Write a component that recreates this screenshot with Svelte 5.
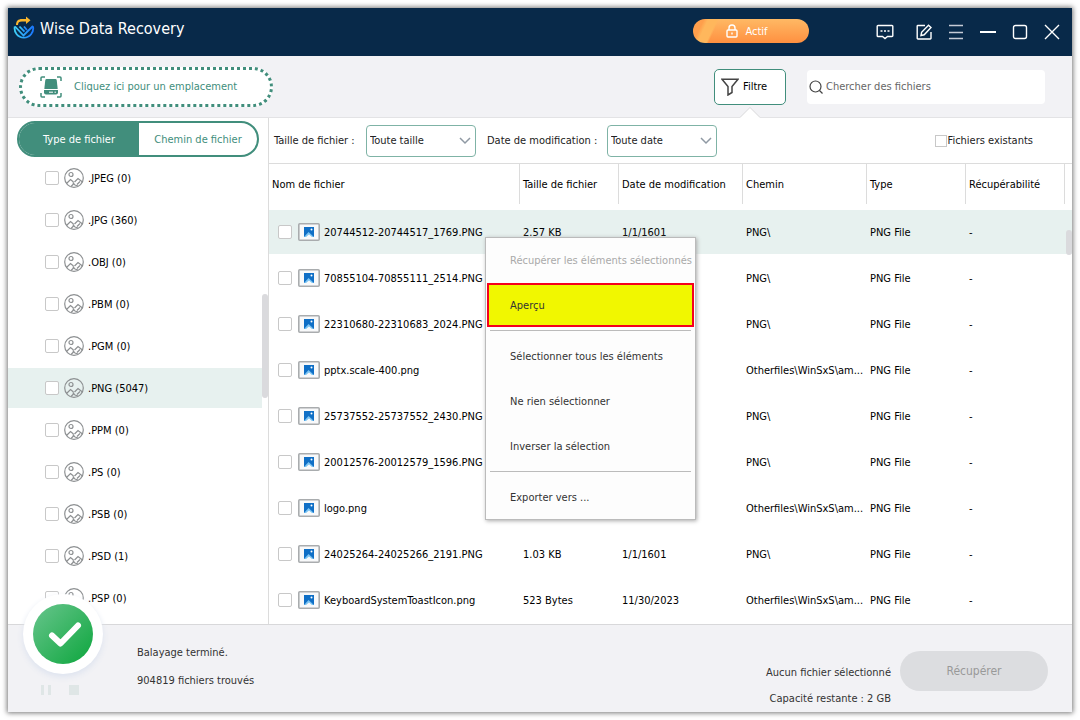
<script>
    // file types listed on the left side
    const types = [
        ['.JPEG', 0], ['.JPG', 360], ['.OBJ', 0], ['.PBM', 0], ['.PGM', 0], ['.PNG', 5047],
        ['.PPM', 0],  ['.PS', 0],    ['.PSB', 0], ['.PSD', 1], ['.PSP', 0]
    ];

    const files = [
        { name: '20744512-20744517_1769.PNG', size: '2.57 KB', date: '1/1/1601', path: 'PNG\\' },
        { name: '70855104-70855111_2514.PNG', size: '', date: '', path: 'PNG\\' },
        { name: '22310680-22310683_2024.PNG', size: '', date: '', path: 'PNG\\' },
        { name: 'pptx.scale-400.png', size: '', date: '', path: 'Otherfiles\\WinSxS\\am...' },
        { name: '25737552-25737552_2430.PNG', size: '', date: '', path: 'PNG\\' },
        { name: '20012576-20012579_1596.PNG', size: '', date: '', path: 'PNG\\' },
        { name: 'logo.png', size: '', date: '', path: 'Otherfiles\\WinSxS\\am...' },
        { name: '24025264-24025266_2191.PNG', size: '1.03 KB', date: '1/1/1601', path: 'PNG\\' },
        { name: 'KeyboardSystemToastIcon.png', size: '523 Bytes', date: '11/30/2023', path: 'Otherfiles\\WinSxS\\am...' }
    ];

    const columns = ['Nom de fichier', 'Taille de fichier', 'Date de modification', 'Chemin', 'Type', 'Récupérabilité'];

    let tab     = $state('type'),
        type    = $state('.PNG'),
        current = $state(0),
        search  = $state('');
</script>

{#snippet chevron()}
    <svg class="chevron" width="12" height="8" viewBox="0 0 12 8"><path d="M1 1l5 5 5-5" /></svg>
{/snippet}

<div class="window">
    <header>
        <svg class="logo" width="22" height="24" viewBox="0 0 22 24">
            <defs>
                <linearGradient id="blue">
                    <stop offset="0" stop-color="#3fd0f7" />
                    <stop offset="1" stop-color="#1a78ff" />
                </linearGradient>
            </defs>
            <g fill="none" stroke="url(#blue)" stroke-width="1.800">
                <path d="M1.800 10.500a9.300 9.300 0 1 0 18.200 0" />
                <path d="M2 10.500l8.500 9 9.500-9.500" />
                <path d="M6.500 10.500l5 5.200M11 10.500l3 3.500" />
            </g>
            <path d="M3 9c0-4 2-6 6-6h4V.5L17.500 4.200 13 8V5.500H9C6 5.500 5 6.500 5 9z" fill="#f9b62d" />
        </svg>
        <h1>Wise Data Recovery</h1>

        <button class="active">
            <svg width="12" height="14" viewBox="0 0 12 14">
                <rect x="1" y="6" width="10" height="7" rx="1" />
                <path d="M3 6V4a3 3 0 0 1 6 0v2M6 8.500v2" />
            </svg>
            Actif
        </button>

        <nav>
            <button class="message" aria-label="Message">
                <svg width="18" height="16" viewBox="0 0 18 16">
                    <path d="M2 1.500h14a.8.8 0 0 1 .8.8v9.400a.8.8 0 0 1-.8.8h-4.500L9 14.500l-2.500-2H2a.8.8 0 0 1-.8-.8V2.300a.8.8 0 0 1 .8-.8z" />
                    <path d="M4.500 7h2M8 7h2M11.500 7h2" />
                </svg>
            </button>
            <button aria-label="Modifier">
                <svg width="16" height="16" viewBox="0 0 16 16">
                    <path d="M9 1.500H2A.7.7 0 0 0 1.200 2v12.300a.7.7 0 0 0 .8.700h12.200a.7.7 0 0 0 .8-.7V8" />
                    <path d="M5 11.500l.6-3.200L12.500 1.200l2.500 2.400-6.800 7.200z" />
                </svg>
            </button>
            <button aria-label="Menu">
                <svg width="16" height="16" viewBox="0 0 16 16"><path d="M1 1.500h14M1 8.500h14M1 14.500h14" stroke="#c5cbd6" /></svg>
            </button>
            <button aria-label="Réduire">
                <svg width="16" height="16" viewBox="0 0 16 16"><path d="M0 8h16" stroke-width="2" /></svg>
            </button>
            <button aria-label="Agrandir">
                <svg width="16" height="16" viewBox="0 0 16 16"><rect x="1.500" y="1.500" width="13" height="13" rx="2" /></svg>
            </button>
            <button aria-label="Fermer">
                <svg width="16" height="16" viewBox="0 0 16 16"><path d="M1 1l14 14M15 1L1 15" /></svg>
            </button>
        </nav>
    </header>

    <div class="toolbar">
        <button class="location">
            <svg width="22" height="22" viewBox="0 0 22 22">
                <path d="M1 5V2q0-1 1-1h3M17 1h3q1 0 1 1v3M21 17v3q0 1-1 1h-3M5 21H2q-1 0-1-1v-3" fill="none" stroke="#418e7c" stroke-width="1.500" />
                <path d="M6.500 3h9q1 0 1.200 1l1 9H4.300l1-9q.2-1 1.200-1z" fill="#418e7c" />
                <path d="M4 14h14v2.500q0 2-2 2H6q-2 0-2-2z" fill="#418e7c" />
                <path d="M9 16.200h4M14.500 16.200h1.500" stroke="#fff" />
            </svg>
            Cliquez ici pour un emplacement
        </button>

        <button class="filter">
            <svg width="18" height="18" viewBox="0 0 18 18">
                <path d="M1 1.200h16l-6 7.300v6l-4 2.500V8.500z" />
            </svg>
            Filtre
        </button>

        <label class="search">
            <svg width="14" height="14" viewBox="0 0 14 14">
                <circle cx="6.500" cy="6.500" r="5.500" />
                <path d="M10.500 10.500l3 3" />
            </svg>
            <input type="text" placeholder="Chercher des fichiers" aria-label="Chercher des fichiers" bind:value={search}>
        </label>
    </div>

    <main>
        <aside>
            <div class="tabs">
                <button class:on={tab === 'type'} onclick={() => tab = 'type'}>Type de fichier</button>
                <button class:on={tab === 'path'} onclick={() => tab = 'path'}>Chemin de fichier</button>
            </div>
            <ul>
                {#each types as [ext, count]}
                    <li class:selected={ext === type}>
                        <input type="checkbox" id="type{ext}">
                        <svg width="20" height="20" viewBox="0 0 20 20">
                            <circle cx="10" cy="10" r="9.300" />
                            <circle cx="7" cy="6.500" r="2" />
                            <path d="M2.500 15.500l4-4 3 2.500M7 18.500l2.500-2.500-.5-1.500 2 2.500 3 1M10.500 14l3.500-3.500 4.500 3.500M13 16.500l3-3" />
                        </svg>
                        <label for="type{ext}">{ext} ({count})</label>
                    </li>
                {/each}
            </ul>
            <div class="thumb"></div>
        </aside>

        <section>
            <div class="filters">
                <label for="size">Taille de fichier :</label>
                <div class="select">
                    <select id="size"><option>Toute taille</option></select>
                    {@render chevron()}
                </div>
                <label for="date">Date de modification :</label>
                <div class="select">
                    <select id="date"><option>Toute date</option></select>
                    {@render chevron()}
                </div>
                <label class="existing"><input type="checkbox">Fichiers existants</label>
            </div>

            <table>
                <colgroup>
                    <col><col class="narrow"><col class="wide"><col class="wide"><col class="narrow"><col class="narrow"><col class="gutter">
                </colgroup>
                <thead>
                    <tr>
                        {#each columns as col}
                            <th><span>{col}</span></th>
                        {/each}
                        <td></td>
                    </tr>
                </thead>
                <tbody>
                    {#each files as file, i}
                        <tr class:selected={i === current} onclick={() => current = i}>
                            <td>
                                <div class="name">
                                    <input type="checkbox" id="file{i}">
                                    <svg width="22" height="18" viewBox="0 0 22 18">
                                        <rect x=".8" y=".8" width="20.400" height="16.400" rx="1" fill="#f8f9fa" stroke="#a9acae" stroke-width="1.600" />
                                        <rect x="6" y="4" width="10" height="10" fill="#0f6fc6" />
                                        <path d="M6 14l4.500-5L16 14z" fill="#7cc4f2" />
                                        <path d="M8 14l3-2.500 3 2.500z" fill="#f8f9fa" />
                                        <circle cx="13.500" cy="6.500" r="1" fill="#fff" />
                                    </svg>
                                    <label for="file{i}">{file.name}</label>
                                </div>
                            </td>
                            <td>{file.size}</td>
                            <td>{file.date}</td>
                            <td>{file.path}</td>
                            <td>PNG File</td>
                            <td>-</td>
                            <td></td>
                        </tr>
                    {/each}
                </tbody>
            </table>
            <div class="thumb"></div>

            <div class="menu" role="menu">
                <button role="menuitem" disabled>Récupérer les éléments sélectionnés</button>
                <button role="menuitem" class="preview">Aperçu</button>
                <hr>
                <button role="menuitem">Sélectionner tous les éléments</button>
                <button role="menuitem">Ne rien sélectionner</button>
                <button role="menuitem">Inverser la sélection</button>
                <hr>
                <button role="menuitem">Exporter vers ...</button>
            </div>
        </section>
    </main>

    <footer>
        <div class="badge">
            <svg width="60" height="60" viewBox="0 0 60 60">
                <defs>
                    <linearGradient id="green" x1="0" y1="0" x2="1" y2="1">
                        <stop offset="0.100" stop-color="#5fc285" />
                        <stop offset="0.900" stop-color="#16a945" />
                    </linearGradient>
                </defs>
                <circle cx="30" cy="30" r="30" fill="url(#green)" />
                <path d="M19 31.500l8.500 8L45 21.500" fill="none" stroke="#fff" stroke-width="6" stroke-linecap="round" stroke-linejoin="round" />
            </svg>
        </div>
        <div class="controls">
            <button aria-label="Pause"><svg width="10" height="10" viewBox="0 0 10 10"><path d="M0 0h3v10H0zM7 0h3v10H7z" /></svg></button>
            <button aria-label="Arrêter"><svg width="10" height="10" viewBox="0 0 10 10"><path d="M0 0h10v10H0z" /></svg></button>
        </div>
        <div class="status">
            <p>Balayage terminé.</p>
            <p>904819 fichiers trouvés</p>
        </div>
        <div class="summary">
            <p>Aucun fichier sélectionné</p>
            <p>Capacité restante : 2 GB</p>
        </div>
        <button class="recover" disabled>Récupérer</button>
    </footer>
</div>

<style>
:global(body) { background: #fff; }

.window {
    box-sizing: border-box;
    display: flex;
    flex-direction: column;
    height: calc(100vh - 16px);
    margin: 8px;
    font: 11px/17px Tahoma, "DejaVu Sans Condensed", sans-serif;
    color: #000;
    background: #fff;
    box-shadow: 0 0 5px 1px #777;
}

.window * { box-sizing: border-box; }
button, input, select { font: inherit; color: inherit; }
button { padding: 0; border: 0; background: none; cursor: pointer; white-space: nowrap; }
svg { flex: none; }
p { margin: 0; }

input[type="checkbox"] {
    appearance: none;
    flex: none;
    width: 14px;
    height: 14px;
    margin: 0;
    background: #fff;
    border: 1px solid #c8c8c8;
    border-radius: 2px;
}
input[type="checkbox"]:checked { background: #418e7c; }

/* title bar */
header {
    display: flex;
    flex: none;
    height: 48px;
    padding: 0 4px 0 5px;
    color: #fff;
    background: #082949;
}
.logo { margin-top: 8px; }
h1 {
    flex: 1;
    margin: 9px 0 0 5px;
    font-size: 16px;
    font-weight: 400;
    line-height: 24px;
}
.active {
    display: flex;
    align-items: center;
    justify-content: center;
    gap: 7px;
    width: 116px;
    height: 24px;
    margin: 11px 60px 0 0;
    padding-right: 8px;
    border-radius: 12px;
    background: linear-gradient(115deg, #ff9f4c 10px, #ffb75c 14px, #ffb75c 22px, transparent 24px), linear-gradient(#ffb964, #ff9040);
}
.active svg, nav svg { fill: none; stroke: #fff; stroke-width: 1.400; }
nav { display: flex; height: 48px; }
nav button { display: grid; place-items: center; width: 32px; }
nav .message { margin-right: 7px; }

/* toolbar */
.toolbar {
    display: flex;
    flex: none;
    align-items: center;
    height: 62px;
    padding: 0 27px 0 11px;
    background: #f2f2f5;
    border-bottom: 1px solid #e3e3e5;
}
.location {
    display: flex;
    align-items: center;
    gap: 12px;
    width: 254px;
    height: 40px;
    margin-right: auto;
    padding-left: 18px;
    color: #418e7c;
    background: #fff;
    border: 3px dotted #418e7c;
    border-radius: 20px;
}
.filter {
    position: relative;
    display: flex;
    align-items: center;
    gap: 4px;
    width: 72px;
    height: 36px;
    margin-right: 21px;
    padding-left: 6px;
    background: #fff;
    border: 1px solid #418e7c;
    border-radius: 5px;
}
.filter svg, .search svg { fill: none; stroke: #444; stroke-width: 1.500; }
.filter::after {   /* pointer towards the filter row */
    content: '';
    position: absolute;
    top: 38px;
    left: 25px;
    border: 10px solid transparent;
    border-top: 0;
    border-bottom-color: #fff;
    filter: drop-shadow(0 -1px 0 #d8d8da);
}
.search {
    display: flex;
    align-items: center;
    gap: 3px;
    width: 238px;
    height: 34px;
    padding-left: 2px;
    background: #fff;
    border-radius: 4px;
}
.search svg { stroke-width: 1.200; }
.search input { flex: 1; min-width: 0; padding: 0; border: 0; outline: none; background: none; }
.search input::placeholder { color: #666; opacity: 1; }

/* body */
main { display: flex; flex: 1; min-height: 0; }

aside {
    position: relative;
    flex: none;
    width: 261px;
    padding-top: 3px;
    overflow: hidden;
    border-right: 1px solid #dcdcdc;
}
.tabs {
    display: grid;
    grid-template-columns: 120px 1fr;
    height: 36px;
    margin: 0 9px;
    overflow: hidden;
    border: 2px solid #418e7c;
    border-radius: 18px;
}
.tabs button { color: #418e7c; }
.tabs .on { color: #fff; background: #418e7c; }

ul { margin: 0; padding: 0; list-style: none; }
li {
    display: flex;
    align-items: center;
    height: 40px;
    margin: 1px 6px 2px 0;
    padding-left: 37px;
}
li svg { margin: 0 4px 0 5px; fill: none; stroke: #8d9092; stroke-width: 1.200; }
.selected { background: #e7f1ef; }

.thumb { position: absolute; right: 0; width: 6px; background: #dadadd; border-radius: 3px; }
aside .thumb { top: 176px; height: 104px; }
section .thumb { top: 112px; height: 25px; }

section { position: relative; flex: 1; min-width: 0; overflow: hidden; }
.filters {
    display: grid;
    grid-template-columns: 92px 121px 120px 110px 1fr;
    align-items: center;
    height: 46px;
    padding: 0 39px 0 5px;
    color: #222;
    border-bottom: 1px solid #dcdcdc;
}
.select { display: grid; align-items: center; width: 110px; }
.select select {
    grid-area: 1 / 1;
    appearance: none;
    height: 32px;
    padding: 0 20px 0 3px;
    background: #fff;
    border: 1px solid #7fb3a6;
    border-radius: 4px;
}
.chevron {
    grid-area: 1 / 1;
    justify-self: end;
    margin-right: 5px;
    fill: none;
    stroke: #8f99a3;
    stroke-width: 1.500;
    pointer-events: none;
}
.existing { display: flex; align-items: center; gap: 1px; justify-self: end; }
.existing input[type="checkbox"] { width: 12px; height: 12px; border-radius: 0; }

table { width: 100%; table-layout: fixed; border-collapse: separate; border-spacing: 0; }
.narrow { width: 99px; }
.wide { width: 124px; }
.gutter { width: 7px; }
th { height: 46px; padding: 0; font-weight: 400; text-align: left; vertical-align: top; }
th span { display: block; height: 40px; padding-left: 3px; line-height: 41px; border-right: 1px solid #dcdcdc; }
tbody td {
    height: 46px;
    padding: 0 0 0 3px;
    overflow: hidden;
    white-space: nowrap;
    border-bottom: 2px solid #fff;
}
tbody td:first-child { padding-left: 9px; }
.name { display: flex; align-items: center; }
.name svg { margin: 0 4px 0 6px; }

/* context menu */
.menu {
    position: absolute;
    top: 119px;
    left: 216px;
    width: 211px;
    color: #333;
    background: #fdfdfd;
    border: 1px solid #bbb;
    box-shadow: 1px 1px 4px #aaa;
}
.menu button { display: block; width: 100%; height: 45px; padding: 0 0 0 24px; text-align: left; }
.menu button:disabled { color: #a9a9a9; }
.menu .preview {
    width: auto;
    min-width: calc(100% - 2px);
    height: 44px;
    margin: 0 1px 3px;
    padding-left: 21px;
    background: #f1f700;
    border: 2px solid #f5001d;
}
.menu hr { height: 1px; margin: 2px 4px 3px; border: 0; background: #bbb; }
.menu button:last-child { height: 44px; }

/* footer */
footer {
    position: relative;
    display: flex;
    flex: none;
    height: 88px;
    padding: 0 24px 0 33px;
    color: #333;
    background: #f2f2f5;
    border-top: 1px solid #d8d8da;
}
.badge {
    position: absolute;
    top: -31px;
    left: 15px;
    display: grid;
    place-items: center;
    width: 80px;
    height: 80px;
    background: #fff;
    border-radius: 50%;
    box-shadow: 0 3px 6px #dde3ef;
}
.controls { display: flex; gap: 18px; align-items: flex-end; width: 96px; padding-bottom: 17px; }
.controls svg { display: block; fill: #dfe6e6; }
.status { flex: 1; padding-top: 19px; }
.status p + p { margin-top: 11px; }
.summary { padding-top: 39px; text-align: right; }
.summary p + p { margin-top: 9px; }
.recover {
    width: 148px;
    height: 40px;
    margin: 26px 0 0 9px;
    font-size: 12px;
    color: #999;
    background: #dcdde0;
    border-radius: 20px;
}
</style>
